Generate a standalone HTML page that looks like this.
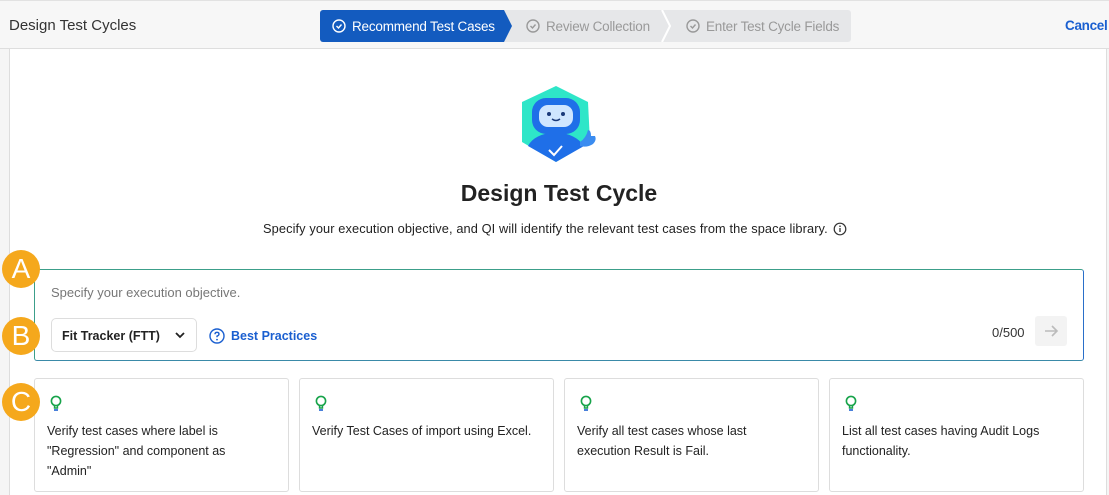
<!DOCTYPE html>
<html><head><style>
*{box-sizing:border-box;margin:0;padding:0}
body{width:1109px;height:495px;overflow:hidden;background:#f5f5f5;font-family:"Liberation Sans",sans-serif;position:relative;color:#222}
.top{position:absolute;left:0;top:0;width:1109px;height:49px;background:#f7f7f7;border-top:1px solid #e2e2e2;border-bottom:1px solid #dedede}
.title{position:absolute;left:9px;top:16px;font-size:15px;color:#333}
.cancel{position:absolute;left:1065px;top:17px;font-size:13.5px;color:#1a5fd0;font-weight:bold;letter-spacing:-0.3px}
.steps{position:absolute;left:320px;top:9px;height:32px;width:531px;background:#e6e7e9;border-radius:3px}
.s1{position:absolute;left:0;top:0;height:32px;width:192px;background:#135bbf;border-radius:3px 0 0 3px;clip-path:polygon(0 0,184px 0,192px 16px,184px 32px,0 32px)}
.st{position:absolute;top:9px;font-size:13.5px;color:#999;letter-spacing:-0.2px}
.card{position:absolute;left:9px;top:49px;width:1098px;height:446px;background:#fff;border-left:1px solid #ddd;border-right:1px solid #ddd}
h1{position:absolute;left:0;width:1098px;text-align:center;top:131px;font-size:23px;font-weight:bold;color:#222}
.sub{position:absolute;left:253px;top:172px;font-size:12.8px;color:#222;letter-spacing:0.1px}
.box{position:absolute;left:24px;top:220px;width:1050px;height:92px;border:1px solid #3c9f8a;border-right-color:#2a6fc9;border-bottom-color:#3a8aa8;border-radius:3px}
.ph{position:absolute;left:16px;top:15px;font-size:13px;color:#777}
.sel{position:absolute;left:16px;top:48px;width:146px;height:34px;border:1px solid #ddd;border-radius:5px;font-size:12.5px;font-weight:bold;padding:10px 10px;color:#222}
.bp{position:absolute;left:173px;top:59px;font-size:12.5px;color:#1a5fd0;font-weight:bold}
.cnt{position:absolute;left:957px;top:55px;font-size:13px;color:#333}
.arr{position:absolute;left:1000px;top:46px;width:32px;height:30px;background:#f3f3f3;border-radius:3px}
.sug{position:absolute;top:329px;width:255px;height:114px;border:1px solid #ddd;border-radius:3px}
.sug p{position:absolute;left:12px;top:42px;font-size:12.5px;line-height:20px;color:#222;width:200px}
.sug svg{position:absolute;left:15px;top:16px}
.badge{position:absolute;left:2px;width:38px;height:38px;border-radius:50%;background:#f5a81c;color:#fff;font-size:28px;text-align:center;line-height:38px}
</style></head><body>
<div class="top">
<div class="title">Design Test Cycles</div>
<div class="steps">
<div class="s1"></div>
<svg style="position:absolute;left:12px;top:9px" width="14" height="14" viewBox="0 0 14 14"><circle cx="7" cy="7" r="6" fill="none" stroke="#fff" stroke-width="1.4"/><path d="M4.5 7l2 2 3-3.5" fill="none" stroke="#fff" stroke-width="1.4"/></svg>
<div class="st" style="left:32px;color:#fff">Recommend Test Cases</div>
<svg style="position:absolute;left:206px;top:9px" width="14" height="14" viewBox="0 0 14 14"><circle cx="7" cy="7" r="6" fill="none" stroke="#999" stroke-width="1.4"/><path d="M4.5 7l2 2 3-3.5" fill="none" stroke="#999" stroke-width="1.4"/></svg>
<div class="st" style="left:226px">Review Collection</div>
<svg style="position:absolute;left:340px;top:0" width="12" height="32"><path d="M2 0l8 16-8 16" fill="none" stroke="#fff" stroke-width="2"/></svg>
<svg style="position:absolute;left:366px;top:9px" width="14" height="14" viewBox="0 0 14 14"><circle cx="7" cy="7" r="6" fill="none" stroke="#999" stroke-width="1.4"/><path d="M4.5 7l2 2 3-3.5" fill="none" stroke="#999" stroke-width="1.4"/></svg>
<div class="st" style="left:386px">Enter Test Cycle Fields</div>
</div>
<div class="cancel">Cancel</div>
</div>
<div class="card">
<svg style="position:absolute;left:508px;top:35px" width="84" height="80" viewBox="0 0 84 80">
<polygon points="38,2 70,18 72,58 38,78 4,58 4,18" fill="#2ee6c8"/>
<path d="M10 62 Q16 50 38 48 Q58 50 66 62 L38 78Z" fill="#1f6fe8"/>
<rect x="14" y="14" width="48" height="36" rx="14" fill="#1f6fe8"/>
<rect x="21" y="21" width="34" height="22" rx="9" fill="#cfe6ff"/>
<circle cx="31" cy="30" r="2" fill="#1a3a7a"/><circle cx="45" cy="30" r="2" fill="#1a3a7a"/>
<path d="M34 35q4 3 8 0" fill="none" stroke="#1a3a7a" stroke-width="1.5"/>
<path d="M31 66l5 5 8-9" fill="none" stroke="#fff" stroke-width="2"/>
<path d="M62 58q6-4 8-12q3 0 3 6h4q2 4-2 8q-6 4-13 2z" fill="#3b8cf0"/>
</svg>
<h1>Design Test Cycle</h1>
<div class="sub">Specify your execution objective, and QI will identify the relevant test cases from the space library.</div>
<svg style="position:absolute;left:823px;top:173px" width="14" height="14" viewBox="0 0 14 14"><circle cx="7" cy="7" r="5.8" fill="none" stroke="#333" stroke-width="1.2"/><path d="M7 6v4" stroke="#333" stroke-width="1.3"/><circle cx="7" cy="4.2" r=".8" fill="#333"/></svg>
<div class="box">
<div class="ph">Specify your execution objective.</div>
<div class="sel">Fit Tracker (FTT)</div>
<svg style="position:absolute;left:140px;top:62px" width="10" height="8"><path d="M1 1l4 4 4-4" fill="none" stroke="#222" stroke-width="1.8"/></svg>
<svg style="position:absolute;left:174px;top:58px" width="16" height="16" viewBox="0 0 16 16"><circle cx="8" cy="8" r="7" fill="none" stroke="#1a5fd0" stroke-width="1.4"/><path d="M6 6.3q0-2 2-2t2 1.8q0 1.2-2 2v1.2" fill="none" stroke="#1a5fd0" stroke-width="1.4"/><circle cx="8" cy="11.6" r=".9" fill="#1a5fd0"/></svg>
<div class="bp" style="left:196px">Best Practices</div>
<div class="cnt">0/500</div>
<div class="arr"><svg style="position:absolute;left:8px;top:7px" width="16" height="16"><path d="M2 8h12M9 3l5 5-5 5" fill="none" stroke="#bbb" stroke-width="1.6"/></svg></div>
</div>
<div class="sug" style="left:24px"><svg width="12" height="17" viewBox="0 0 12 17"><circle cx="6" cy="6" r="4.6" fill="none" stroke="#17a34a" stroke-width="1.6"/><path d="M4.5 10.5v2.5h3v-2.5" fill="none" stroke="#17a34a" stroke-width="1.4"/><path d="M4 15h4" stroke="#1a5fd0" stroke-width="1.6"/></svg><p>Verify test cases where label is "Regression" and component as "Admin"</p></div>
<div class="sug" style="left:289px"><svg width="12" height="17" viewBox="0 0 12 17"><circle cx="6" cy="6" r="4.6" fill="none" stroke="#17a34a" stroke-width="1.6"/><path d="M4.5 10.5v2.5h3v-2.5" fill="none" stroke="#17a34a" stroke-width="1.4"/><path d="M4 15h4" stroke="#1a5fd0" stroke-width="1.6"/></svg><p style="width:240px">Verify Test Cases of import using Excel.</p></div>
<div class="sug" style="left:554px"><svg width="12" height="17" viewBox="0 0 12 17"><circle cx="6" cy="6" r="4.6" fill="none" stroke="#17a34a" stroke-width="1.6"/><path d="M4.5 10.5v2.5h3v-2.5" fill="none" stroke="#17a34a" stroke-width="1.4"/><path d="M4 15h4" stroke="#1a5fd0" stroke-width="1.6"/></svg><p>Verify all test cases whose last execution Result is Fail.</p></div>
<div class="sug" style="left:819px"><svg width="12" height="17" viewBox="0 0 12 17"><circle cx="6" cy="6" r="4.6" fill="none" stroke="#17a34a" stroke-width="1.6"/><path d="M4.5 10.5v2.5h3v-2.5" fill="none" stroke="#17a34a" stroke-width="1.4"/><path d="M4 15h4" stroke="#1a5fd0" stroke-width="1.6"/></svg><p>List all test cases having Audit Logs functionality.</p></div>
</div>
<div class="badge" style="top:250px">A</div>
<div class="badge" style="top:317px">B</div>
<div class="badge" style="top:383px">C</div>
</body></html>
